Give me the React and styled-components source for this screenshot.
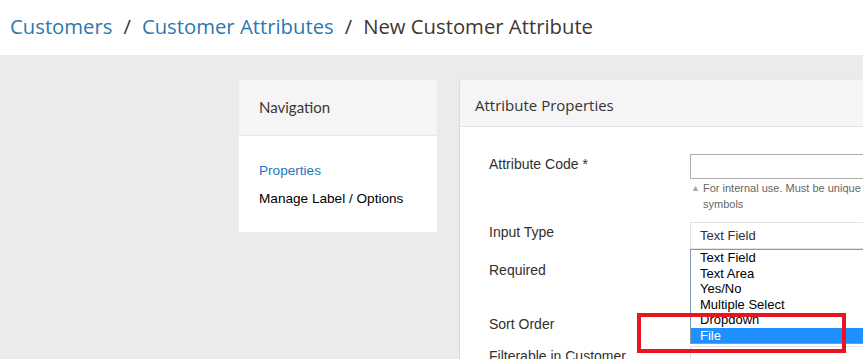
import React from "react";
import styled, { createGlobalStyle } from "styled-components";

const GlobalStyle = createGlobalStyle`
	html, body {
		margin: 0;
		padding: 0;
		background: #ffffff;
		overflow: hidden;
	}
	body {
		font-family: "Liberation Sans", Arial, sans-serif;
		color: #303030;
	}
`;

const inputTypes = ["Text Field", "Text Area", "Yes/No", "Multiple Select", "Dropdown", "File"];

function App() {
	return (
		<Page>
			<GlobalStyle />
			<Header>
				<Crumb href="#">Customers</Crumb>
				<Sep>/</Sep>
				<Crumb href="#">Customer Attributes</Crumb>
				<Sep>/</Sep>
				<Current>New Customer Attribute</Current>
			</Header>
			<Main>
				<NavCard>
					<NavHead>Navigation</NavHead>
					<NavBody>
						<NavLink $active>Properties</NavLink>
						<NavLink>Manage Label / Options</NavLink>
					</NavBody>
				</NavCard>
				<Card>
					<CardHead>Attribute Properties</CardHead>
					<Form>
						<Row $space={10}>
							<Label>Attribute Code *</Label>
							<Field>
								<TextInput />
								<Note>
									<Arrow>▲</Arrow>
									<span>
										For internal use. Must be unique with no spaces. Maximum length of attribute code must be less than 30 symbols
									</span>
								</Note>
							</Field>
						</Row>
						<Row $space={11}>
							<Label>Input Type</Label>
							<Field>
								<Select>Text Field</Select>
								<Options>
									{inputTypes.map((t) => (
										<Option key={t} $selected={t === "File"}>
											{t}
										</Option>
									))}
								</Options>
							</Field>
						</Row>
						<Row $space={27}>
							<Label>Required</Label>
							<Field>
								<Select />
							</Field>
						</Row>
						<Row $space={7}>
							<Label>Sort Order</Label>
							<Field>
								<TextInput $light />
							</Field>
						</Row>
						<Row $space={7}>
							<Label>Filterable in Customer Grid</Label>
							<Field>
								<Select />
							</Field>
						</Row>
					</Form>
				</Card>
			</Main>
			<Highlight />
		</Page>
	);
}

export default App;

const Page = styled.div`
	position: relative;
	width: 863px;
	height: 359px;
	overflow: hidden;
	background: #ebebeb;
`;
const Header = styled.div`
	height: 55px;
	background: #ffffff;
	display: flex;
	align-items: center;
	padding: 0 0 4px 10px;
	box-sizing: border-box;
	font-family: "Open Sans", sans-serif;
	font-size: 20.3px;
	font-weight: 400;
	white-space: nowrap;
`;
const Crumb = styled.a`
	color: #2a78b0;
	text-decoration: none;
`;
const Sep = styled.span`
	color: #41362f;
	margin: 0 11px;
`;
const Current = styled.span`
	color: #41362f;
`;
const Main = styled.div`
	display: flex;
	align-items: flex-start;
	gap: 23px;
	padding: 25px 0 0 239px;
`;
const NavCard = styled.div`
	flex: 0 0 198px;
	background: #ffffff;
`;
const NavHead = styled.div`
	height: 56px;
	display: flex;
	align-items: center;
	padding: 0 0 2px 20px;
	box-sizing: border-box;
	background: #f5f5f5;
	border-bottom: 1px solid #e8e8e8;
	font-family: Lato, sans-serif;
	font-size: 15px;
	color: #41362f;
`;
const NavBody = styled.div`
	padding: 21px 20px 19px;
`;
const NavLink = styled.div`
	line-height: 28px;
	font-size: 13.6px;
	color: ${(p) => (p.$active ? "#1979c3" : "#000000")};
`;
const Card = styled.div`
	flex: 0 0 820px;
	background: #ffffff;
	border-radius: 3px 0 0 0;
	box-shadow: -1px 0 1px rgba(0, 0, 0, 0.08);
	min-height: 300px;
`;
const CardHead = styled.div`
	height: 47px;
	display: flex;
	align-items: center;
	padding: 3px 0 0 15px;
	box-sizing: border-box;
	background: #f5f5f5;
	border-bottom: 1px solid #e3e3e3;
	border-radius: 3px 0 0 0;
	font-family: "Open Sans", sans-serif;
	font-size: 15px;
	color: #333333;
`;
const Form = styled.div`
	padding: 27px 0 0 29px;
`;
const Row = styled.div`
	display: grid;
	grid-template-columns: 201px 540px;
	margin-bottom: ${(p) => p.$space}px;
`;
const Label = styled.div`
	max-width: 150px;
	font-size: 14px;
	line-height: 18px;
	padding-top: 1px;
	color: #303030;
`;
const Field = styled.div`
	position: relative;
`;
const TextInput = styled.div`
	height: 25px;
	box-sizing: border-box;
	border: 1px solid ${(p) => (p.$light ? "#e3e3e3" : "#adadad")};
	background: #ffffff;
`;
const Note = styled.div`
	display: flex;
	margin-top: 1px;
	font-size: 11px;
	line-height: 16px;
	color: #666666;
`;
const Arrow = styled.span`
	flex: 0 0 13px;
	font-size: 9px;
	color: #a8a8a8;
	padding-left: 1px;
	box-sizing: border-box;
`;
const Select = styled.div`
	height: 27px;
	box-sizing: border-box;
	border: 1px solid #e3e3e3;
	padding-left: 9px;
	display: flex;
	align-items: center;
	font-size: 13px;
	color: #303030;
	background: #ffffff;
`;
const Options = styled.div`
	position: absolute;
	top: 27px;
	left: 0;
	right: 0;
	z-index: 2;
	background: #ffffff;
	border: 1px solid #7f9db9;
	border-right: none;
	font-size: 13px;
`;
const Option = styled.div`
	height: 15.5px;
	line-height: 15.5px;
	padding-left: 9px;
	color: ${(p) => (p.$selected ? "#ffffff" : "#000000")};
	background: ${(p) => (p.$selected ? "#1e90ff" : "transparent")};
`;
const Highlight = styled.div`
	position: absolute;
	left: 637px;
	top: 313px;
	width: 209px;
	height: 40px;
	box-sizing: border-box;
	border: 4px solid #e8141f;
	z-index: 3;
`;
